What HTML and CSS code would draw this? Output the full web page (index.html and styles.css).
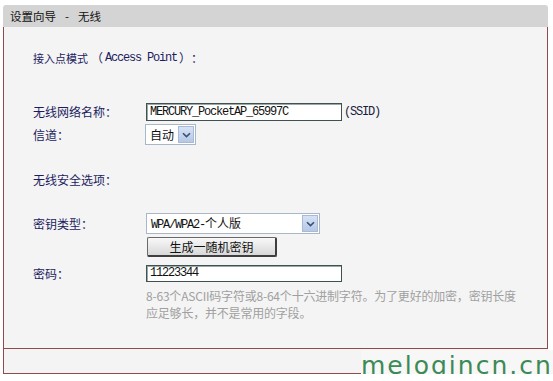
FILE: index.html
```html
<!DOCTYPE html>
<html lang="zh-CN">
<head>
<meta charset="utf-8">
<title>设置向导 - 无线</title>
<link rel="stylesheet" href="styles.css">
</head>
<body>
<div class="wrap">
  <div class="head">设置向导<span class="dash">-</span>无线</div>
  <div class="panel">
    <div class="title"><span class="t-cn">接入点模式</span><span class="paren">（</span><span class="mono">Access Point</span><span class="paren">）</span><span class="paren">：</span></div>

    <div class="row r-ssid">
      <div class="label">无线网络名称：</div>
      <div class="field">
        <div class="input mono">MERCURY_PocketAP_65997C</div>
        <span class="suffix mono">(SSID)</span>
      </div>
    </div>

    <div class="row r-chan">
      <div class="label">信道：</div>
      <div class="field">
        <div class="select sel-chan"><span class="sel-text">自动</span><span class="sel-arrow"><svg width="9" height="6" viewBox="0 0 9 6"><path d="M1 1.2 L4.5 4.6 L8 1.2" fill="none" stroke="#3b4f78" stroke-width="1.6"/></svg></span></div>
      </div>
    </div>

    <div class="row r-sec">
      <div class="label">无线安全选项：</div>
    </div>

    <div class="row r-type">
      <div class="label">密钥类型：</div>
      <div class="field">
        <div class="select sel-type"><span class="sel-text"><span class="mono">WPA/WPA2-</span>个人版</span><span class="sel-arrow"><svg width="9" height="6" viewBox="0 0 9 6"><path d="M1 1.2 L4.5 4.6 L8 1.2" fill="none" stroke="#3b4f78" stroke-width="1.6"/></svg></span></div>
      </div>
    </div>

    <div class="row r-btn">
      <div class="label"></div>
      <div class="field"><div class="btn">生成一随机密钥</div></div>
    </div>

    <div class="row r-pwd">
      <div class="label">密码：</div>
      <div class="field"><div class="input mono">11223344</div></div>
    </div>

    <div class="row r-hint">
      <div class="label"></div>
      <div class="hint">8-63个ASCII码字符或8-64个十六进制字符。为了更好的加密，密钥长度<br>应足够长，并不是常用的字段。</div>
    </div>
  </div>
  <div class="foot"></div>
</div>
<div class="watermark">melogincn.cn</div>
</body>
</html>
```

FILE: styles.css
```css
html, body {
  margin: 0;
  padding: 0;
  background: #ffffff;
}
body {
  position: relative;
  padding-top: 5px;
  font-family: "Noto Sans CJK SC", "Liberation Sans", sans-serif;
  font-size: 12px;
}
.wrap {
  margin-left: 3px;
  width: 545px;
}
.head {
  height: 22px;
  line-height: 22px;
  background: #d4d4d4;
  border-radius: 3px 3px 0 0;
  padding-left: 7px;
  font-size: 11.5px;
  color: #111;
}
.head .dash {
  display: inline-block;
  width: 22px;
  text-align: center;
}
.panel {
  box-sizing: border-box;
  height: 322px;
  background: #f4f4f4;
  border-left: 1px solid #8e4b4b;
  border-right: 1px solid #8e4b4b;
  border-bottom: 1px solid #8e4b4b;
  padding: 23px 0 0 29px;
}
.foot {
  box-sizing: border-box;
  height: 25px;
  width: 545px;
  background: #f4f4f4;
  border-left: 1px solid #8e4b4b;
  border-bottom: 1px solid #8e4b4b;
}
.mono {
  font-family: "Liberation Mono", monospace;
  letter-spacing: -1.2px;
}
.title {
  display: flex;
  align-items: center;
  height: 16px;
  line-height: 16px;
  color: #1c1c60;
}
.title .t-cn {
  font-size: 11px;
  width: 58px;
}
.title .paren {
  width: 12px;
  text-align: center;
  font-size: 12px;
}
.title .mono {
  font-size: 12px;
  width: 74px;
  padding-left: 2px;
}
.row {
  display: grid;
  grid-template-columns: 113px 1fr;
  align-items: center;
}
.label {
  color: #1c1c60;
  line-height: 16px;
}
.field {
  display: flex;
  align-items: center;
}
.r-ssid { margin-top: 37px; height: 18px; }
.r-chan { margin-top: 3px; height: 21px; }
.r-sec  { margin-top: 27px; height: 16px; }
.r-type { margin-top: 25px; height: 21px; }
.r-btn  { margin-top: 3px; height: 20px; }
.r-pwd  { margin-top: 8px; height: 17px; }
.r-hint { margin-top: 5px; align-items: start; }

.input {
  box-sizing: border-box;
  width: 196px;
  height: 18px;
  line-height: 16px;
  background: #fff;
  border: 1px solid #3f5252;
  box-shadow: inset 1px 1px 0 #9aa8a8;
  padding-left: 3px;
  font-size: 12px;
  color: #111;
}
.r-pwd .input { height: 17px; line-height: 15px; }
.suffix {
  margin-left: 2px;
  font-size: 12px;
  color: #1c1c40;
}
.select {
  box-sizing: border-box;
  display: flex;
  align-items: center;
  height: 21px;
  background: #fff;
  border: 1px solid #a9b8c9;
}
.sel-chan { width: 51px; margin-left: -1px; }
.sel-type { width: 174px; }
.sel-text {
  flex: 1;
  padding-left: 4px;
  color: #111;
  font-size: 12px;
  line-height: 19px;
  white-space: nowrap;
}
.sel-arrow {
  width: 16px;
  height: 17px;
  margin-right: 1px;
  box-sizing: border-box;
  border: 1px solid #a8bad6;
  background: linear-gradient(#d6e2f6, #b6c8e4);
  display: flex;
  align-items: center;
  justify-content: center;
}
.btn {
  box-sizing: border-box;
  width: 130px;
  height: 20px;
  margin-left: 1px;
  border: 1px solid #6a6a6a;
  border-right: 2px solid #3e3e3e;
  border-bottom: 2px solid #3e3e3e;
  border-radius: 2px;
  background: linear-gradient(#f8f8f8, #d8d8d8);
  text-align: center;
  line-height: 17px;
  font-size: 12px;
  color: #111;
}
.hint {
  color: #a0a0a0;
  line-height: 17px;
  font-size: 12px;
  letter-spacing: -0.2px;
}
.watermark {
  position: absolute;
  left: 361px;
  top: 350px;
  padding-right: 4px;
  background: #f7f7f7;
  font-family: "DejaVu Sans", sans-serif;
  font-size: 25px;
  letter-spacing: 2px;
  line-height: 31px;
  color: #3c8a55;
}
```
